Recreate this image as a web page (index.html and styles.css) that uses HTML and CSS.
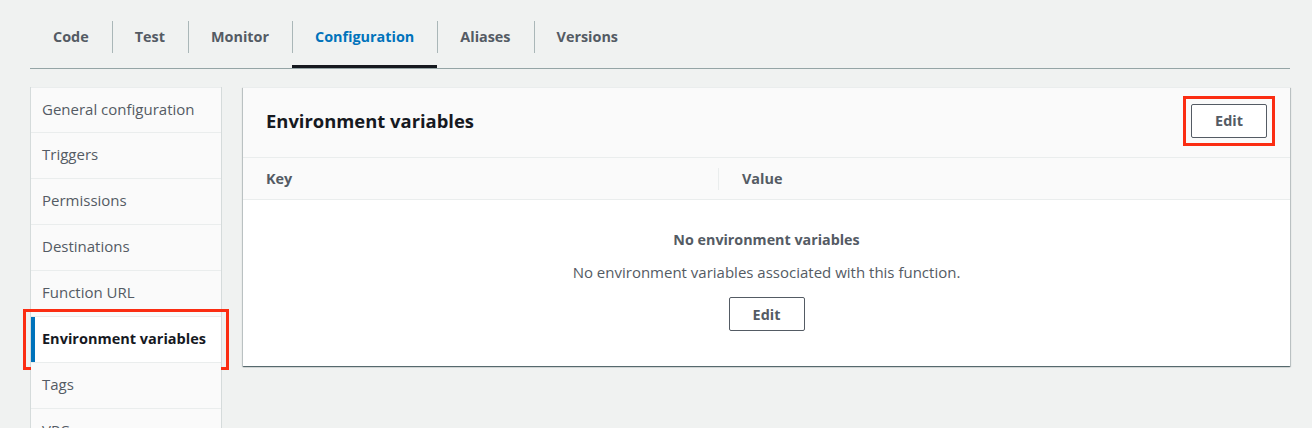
FILE: index.html
```html
<!DOCTYPE html>
<html lang="en">
<head>
<meta charset="utf-8">
<title>Configuration</title>
<link rel="stylesheet" href="styles.css">
</head>
<body>
<div class="page">
  <nav class="tabs">
    <a class="tab">Code</a>
    <a class="tab">Test</a>
    <a class="tab">Monitor</a>
    <a class="tab tab-active">Configuration</a>
    <a class="tab">Aliases</a>
    <a class="tab">Versions</a>
  </nav>
  <div class="content">
    <ul class="sidenav">
      <li class="nav-item">General configuration</li>
      <li class="nav-item">Triggers</li>
      <li class="nav-item">Permissions</li>
      <li class="nav-item">Destinations</li>
      <li class="nav-item">Function URL</li>
      <li class="nav-item nav-active highlight">Environment variables</li>
      <li class="nav-item">Tags</li>
      <li class="nav-item">VPC</li>
    </ul>
    <section class="panel">
      <header class="panel-header">
        <h2 class="panel-title">Environment variables</h2>
        <span class="mark highlight"><button class="btn">Edit</button></span>
      </header>
      <div class="table-head">
        <div class="th">Key</div>
        <div class="th th-sep">Value</div>
      </div>
      <div class="empty">
        <div class="empty-title">No environment variables</div>
        <div class="empty-text">No environment variables associated with this function.</div>
        <button class="btn">Edit</button>
      </div>
    </section>
  </div>
</div>
</body>
</html>
```
FILE: styles.css
```css
* { box-sizing: border-box; }
html, body { margin: 0; padding: 0; }
body {
  background: #f0f2f1;
  font-family: "Open Sans", "Liberation Sans", sans-serif;
  color: #16191f;
  height: 428px;
  overflow: hidden;
}
.page {
  padding: 20px 22px 0 30px;
}
.tabs {
  display: flex;
  border-bottom: 1px solid #95a5a6;
  height: 49px;
}
.tab {
  position: relative;
  display: flex;
  align-items: flex-start;
  padding: 7px 23px 0 23px;
  height: 48px;
  font-size: 14.4px;
  font-weight: 700;
  color: #545b64;
  line-height: 20px;
}
.tab + .tab::before {
  content: "";
  position: absolute;
  left: 0;
  top: 1px;
  height: 32px;
  border-left: 1px solid #aab7b8;
}
.tab-active {
  color: #0073bb;
  border-bottom: 3px solid #16191f;
}
.content {
  display: flex;
  align-items: flex-start;
  gap: 21px;
  margin-top: 18px;
}
.sidenav {
  list-style: none;
  margin: 0;
  padding: 0;
  width: 192px;
  flex: none;
  background: #eaeded;
  border-left: 1px solid #d5dbdb;
  border-right: 1px solid #d5dbdb;
  display: flex;
  flex-direction: column;
  gap: 1px;
}
.nav-item {
  height: 45px;
  display: flex;
  align-items: center;
  padding: 0 0 3px 11px;
  background: #fafafa;
  font-size: 15px;
  color: #545b64;
  white-space: nowrap;
  overflow: hidden;
}
.nav-item:first-child { border-top: 1px solid #eaeded; }
.nav-active {
  background: #fff;
  color: #16191f;
  font-size: 14.5px;
  font-weight: 700;
  border-left: 4px solid #0073bb;
  padding-left: 7px;
}
.highlight {
  outline: 3px solid #fb2d12;
  outline-offset: 5px;
}
.mark {
  display: inline-flex;
}
.panel {
  flex: 1;
  background: #fff;
  border-top: 1px solid #eaeded;
  box-shadow: 0 1px 1px 0 rgba(0,28,36,.5), 1px 1px 1px 0 rgba(0,28,36,.15), -1px 1px 1px 0 rgba(0,28,36,.15);
}
.panel-header {
  display: flex;
  align-items: center;
  justify-content: space-between;
  height: 70px;
  padding: 0 23px 4px 23px;
  background: #fafafa;
  border-bottom: 1px solid #eaeded;
}
.panel-title {
  margin: 0;
  font-size: 18.4px;
  font-weight: 700;
  line-height: 22px;
  color: #16191f;
}
.btn {
  width: 76px;
  height: 34px;
  border: 1px solid #545b64;
  border-radius: 2px;
  background: #fff;
  color: #545b64;
  font-family: inherit;
  font-size: 14.4px;
  font-weight: 700;
  padding: 0;
  cursor: pointer;
}
.table-head {
  display: grid;
  grid-template-columns: 475px 1fr;
  height: 42px;
  align-items: center;
  background: #fafafa;
  border-bottom: 1px solid #eaeded;
}
.th {
  padding-left: 23px;
  font-size: 14.4px;
  font-weight: 700;
  color: #545b64;
  line-height: 22px;
}
.th-sep {
  border-left: 1px solid #eaeded;
}
.empty {
  display: flex;
  flex-direction: column;
  align-items: center;
  padding: 30px 0 35px;
}
.empty-title {
  font-size: 14.3px;
  font-weight: 700;
  color: #545b64;
  line-height: 20px;
}
.empty-text {
  margin-top: 12px;
  font-size: 15px;
  color: #545b64;
  line-height: 20px;
}
.empty .btn { margin-top: 15px; }
```
